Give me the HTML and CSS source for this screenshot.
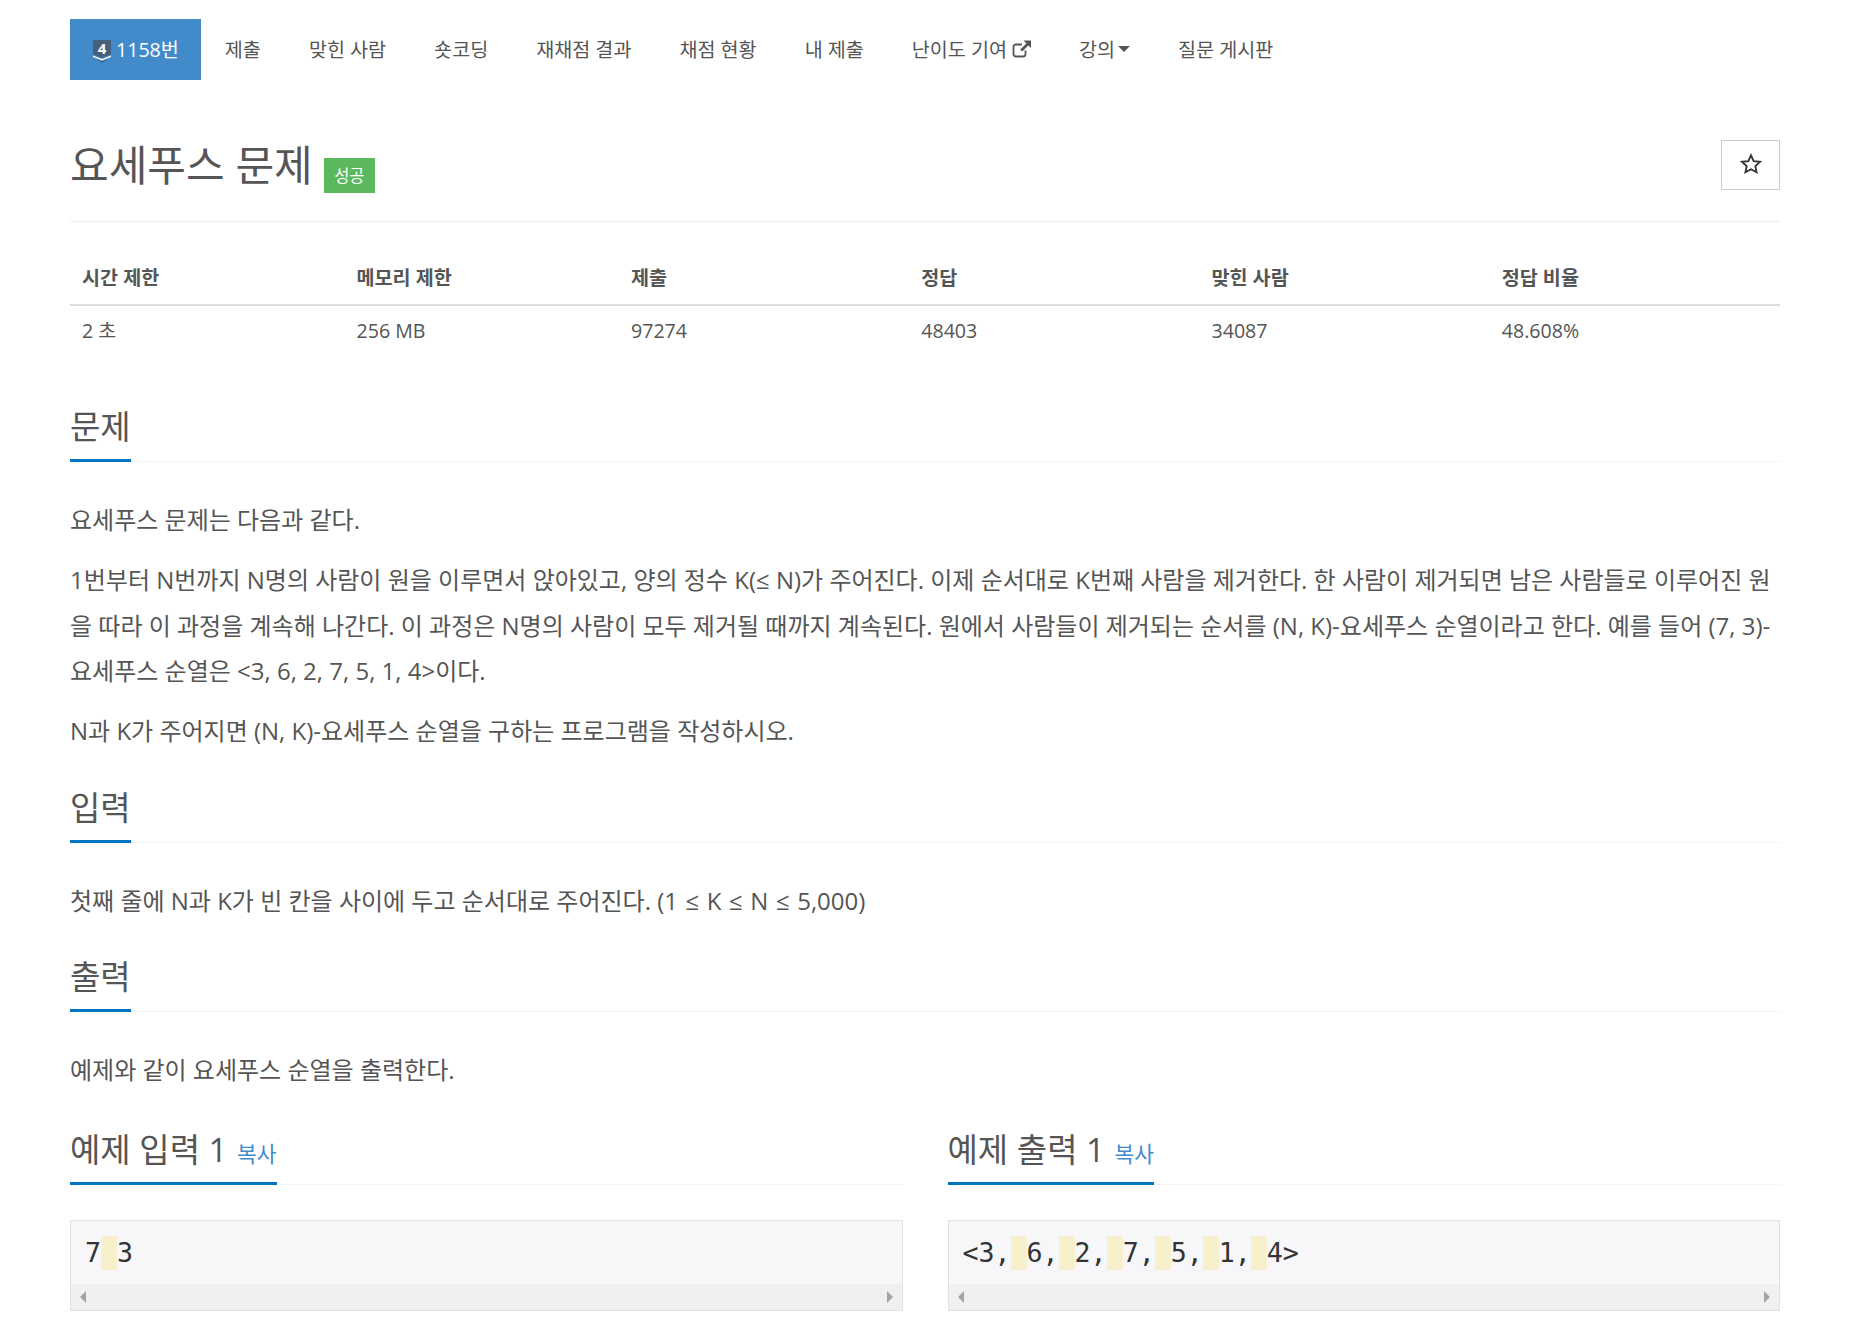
FILE: index.html
```html
<!DOCTYPE html>
<html lang="ko">
  <head>
    <meta charset="utf-8" />
    <title>요세푸스 문제</title>
    <link rel="stylesheet" href="styles.css">
  </head>
  <body>
    <nav class="tabs">
      <a class="tab active" href="#">
        <span class="tier">
          <svg viewBox="0 0 18 23" width="18" height="23"><path d="M0 0h18v14.500l-9 3.500-9-3.500z" fill="#46607b"/><path d="M0 15.500l9 3.500 9-3.500v1.500l-9 3.500-9-3.500z" fill="#fff"/><path d="M2 18.500l7 2.700 7-2.700-7 4.500z" fill="#46607b"/></svg>
          <span class="tier-num">4</span>
        </span>1158번</a>
      <a class="tab" href="#">제출</a>
      <a class="tab" href="#">맞힌 사람</a>
      <a class="tab" href="#">숏코딩</a>
      <a class="tab" href="#">재채점 결과</a>
      <a class="tab" href="#">채점 현황</a>
      <a class="tab" href="#">내 제출</a>
      <a class="tab" href="#">난이도 기여<svg class="ext" viewBox="0 0 19 18" width="19" height="18"><path d="M13.500 10.500V14a2.500 2.500 0 0 1-2.500 2.500H4A2.500 2.500 0 0 1 1.500 14V7A2.500 2.500 0 0 1 4 4.500h6" fill="none" stroke="#555" stroke-width="1.800"/><path d="M11.500 0.500H19V8l-2.600-2.600-6.200 6.200-2-2 6.200-6.200z" fill="#555"/></svg></a>
      <a class="tab" href="#">강의<span class="caret"></span></a>
      <a class="tab" href="#">질문 게시판</a>
    </nav>

    <header class="page-header">
      <h1>요세푸스 문제 <span class="label">성공</span></h1>
      <button class="star" type="button" aria-label="star">
        <svg viewBox="0 0 24 24" width="22" height="22"><path d="M12 2.500l2.900 6.300 6.900.8-5.100 4.700 1.400 6.800-6.100-3.400-6.100 3.400 1.400-6.800-5.100-4.700 6.900-.8z" fill="none" stroke="#333" stroke-width="2"/></svg>
      </button>
    </header>

    <table class="info">
      <thead>
        <tr><th>시간 제한</th><th>메모리 제한</th><th>제출</th><th>정답</th><th>맞힌 사람</th><th>정답 비율</th></tr>
      </thead>
      <tbody>
        <tr><td>2 초</td><td>256 MB</td><td>97274</td><td>48403</td><td>34087</td><td>48.608%</td></tr>
      </tbody>
    </table>

    <section>
      <div class="headline"><h2>문제</h2></div>
      <div class="text">
        <p>요세푸스 문제는 다음과 같다.</p>
        <p>1번부터 N번까지 N명의 사람이 원을 이루면서 앉아있고, 양의 정수 K(≤ N)가 주어진다. 이제 순서대로 K번째 사람을 제거한다. 한 사람이 제거되면 남은 사람들로 이루어진 원을 따라 이 과정을 계속해 나간다. 이 과정은 N명의 사람이 모두 제거될 때까지 계속된다. 원에서 사람들이 제거되는 순서를 (N, K)-요세푸스 순열이라고 한다. 예를 들어 (7, 3)-요세푸스 순열은 &lt;3, 6, 2, 7, 5, 1, 4&gt;이다.</p>
        <p>N과 K가 주어지면 (N, K)-요세푸스 순열을 구하는 프로그램을 작성하시오.</p>
      </div>
    </section>

    <section>
      <div class="headline"><h2>입력</h2></div>
      <div class="text">
        <p>첫째 줄에 N과 K가 빈 칸을 사이에 두고 순서대로 주어진다. (1 <span class="le">≤</span> K <span class="le">≤</span> N <span class="le">≤</span> 5,000)</p>
      </div>
    </section>

    <section>
      <div class="headline"><h2>출력</h2></div>
      <div class="text">
        <p>예제와 같이 요세푸스 순열을 출력한다.</p>
      </div>
    </section>

    <div class="samples">
      <section>
        <div class="headline"><h2>예제 입력 1 <a class="copy" href="#">복사</a></h2></div>
        <div class="sample">
          <pre>7<span class="sp"> </span>3</pre>
          <div class="scrollbar"><span class="arrow left"></span><span class="arrow right"></span></div>
        </div>
      </section>
      <section>
        <div class="headline"><h2>예제 출력 1 <a class="copy" href="#">복사</a></h2></div>
        <div class="sample">
          <pre>&lt;3,<span class="sp"> </span>6,<span class="sp"> </span>2,<span class="sp"> </span>7,<span class="sp"> </span>5,<span class="sp"> </span>1,<span class="sp"> </span>4&gt;</pre>
          <div class="scrollbar"><span class="arrow left"></span><span class="arrow right"></span></div>
        </div>
      </section>
    </div>
  </body>
</html>
```

FILE: styles.css
```css
html {
  overflow: hidden;
  height: 1333px;
}
body {
  margin: 0;
  padding: 0 93px 0 70px;
  font-family: "Open Sans", "Noto Sans CJK KR", sans-serif;
  font-size: 24px;
  color: #555;
  background: #fff;
}
.tabs {
  display: flex;
  height: 61px;
  margin-top: 19px;
}
.tab {
  display: flex;
  align-items: center;
  padding: 0 24px 2px;
  font-size: 19.600px;
  color: #555;
  text-decoration: none;
}
.tab.active {
  position: relative;
  background: #428bca;
  color: #fff;
  padding: 0 22px 2px 46px;
}
.tier {
  position: absolute;
  left: 23px;
  top: 21px;
}
.tier svg {
  display: block;
}
.tier-num {
  position: absolute;
  left: 0;
  right: 0;
  top: -2px;
  text-align: center;
  font-size: 15px;
  font-weight: 700;
}
.ext {
  margin-left: 5px;
}
.caret {
  display: inline-block;
  margin-left: 3px;
  border-top: 6px solid #555;
  border-left: 6px solid transparent;
  border-right: 6px solid transparent;
}
.page-header {
  display: flex;
  justify-content: space-between;
  align-items: flex-start;
  margin-top: 60px;
  padding-bottom: 28px;
  border-bottom: 1px solid #eee;
}
h1 {
  margin: 0;
  font-size: 42px;
  font-weight: 400;
  line-height: 50px;
}
.label {
  display: inline-block;
  padding: 0 10.500px;
  height: 35px;
  line-height: 36px;
  background: #5cb85c;
  color: #fff;
  font-size: 16.500px;
  vertical-align: -1px;
}
.star {
  display: flex;
  align-items: center;
  justify-content: center;
  width: 59px;
  height: 50px;
  padding: 0 0 2px;
  border: 1px solid #ccc;
  background: #fff;
}
.info {
  width: 100%;
  margin-top: 30px;
  margin-bottom: 51px;
  border-collapse: collapse;
  table-layout: fixed;
  font-size: 19.600px;
}
.info th {
  width: 17%;
  padding: 12px;
  text-align: left;
  border-bottom: 2px solid #ddd;
  font-weight: 700;
  line-height: 28px;
}
.info th:nth-child(1),
.info th:nth-child(2) {
  width: 16%;
}
.info td {
  padding: 11px 12px;
  line-height: 28px;
}
section {
  margin-top: 34px;
}
.headline {
  border-bottom: 1px dotted #e4e9f0;
  margin-bottom: 35px;
}
h2 {
  display: inline-block;
  margin: 0 0 -1px;
  padding-bottom: 12px;
  border-bottom: 3px solid #0076c0;
  font-size: 33px;
  font-weight: 400;
  line-height: 40px;
}
.text p {
  margin: 0 0 14.500px;
  line-height: 45.500px;
}
.le {
  margin: 0 1.300px;
}
.samples {
  display: grid;
  grid-template-columns: 1fr 1fr;
  gap: 45px;
}
.samples section {
  margin-top: 23px;
}
.samples .headline {
  margin-bottom: 35px;
}
.copy {
  font-size: 21.500px;
  line-height: 1;
  color: #428bca;
  text-decoration: none;
  margin-left: 1px;
}
.sample {
  border: 1px solid #e1e1e8;
  background: #f7f7f9;
  height: 91px;
  box-sizing: border-box;
  overflow: hidden;
}
pre {
  margin: 0;
  height: 63px;
  padding: 15px 14px 0;
  box-sizing: border-box;
  font-family: "DejaVu Sans Mono", monospace;
  font-size: 26.600px;
  line-height: 34px;
  color: #333;
}
.sp {
  display: inline-block;
  background: #f8efcd;
}
.scrollbar {
  position: relative;
  height: 26px;
  background: #f0f0f0;
}
.arrow {
  position: absolute;
  top: 7px;
  border-top: 6px solid transparent;
  border-bottom: 6px solid transparent;
}
.arrow.left {
  left: 9px;
  border-right: 6px solid #a3a3a3;
}
.arrow.right {
  right: 9px;
  border-left: 6px solid #a3a3a3;
}
```
